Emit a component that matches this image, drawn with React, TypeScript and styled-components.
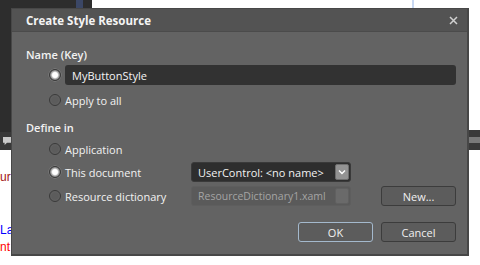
import React from "react";
import styled, { createGlobalStyle } from "styled-components";

const Global = createGlobalStyle`
  html, body { margin: 0; padding: 0; }
  body {
    width: 480px;
    height: 265px;
    overflow: hidden;
    font-family: "Open Sans", "Noto Sans", sans-serif;
  }
`;

const Screen = styled.div`
  position: relative;
  width: 480px;
  height: 265px;
  overflow: hidden;
  display: flex;
  flex-direction: column;
  background: #ffffff;
`;

const TopStrip = styled.div`
  display: flex;
  height: 8px;
  flex: none;
`;

const Seg = styled.div<{ $w?: number; $c: string }>`
  flex: ${(p) => (p.$w ? `0 0 ${p.$w}px` : "1 1 auto")};
  background: ${(p) => p.$c};
`;

const Lower = styled.div`
  flex: 1;
  display: flex;
`;

const LeftPane = styled.div`
  width: 11px;
  flex: none;
  display: flex;
  flex-direction: column;
`;

const DarkBlock = styled.div<{ $h: number; $c: string }>`
  height: ${(p) => p.$h}px;
  flex: none;
  background: ${(p) => p.$c};
`;

const ToolRow = styled.div`
  height: 18px;
  flex: none;
  background: #383838;
  display: flex;
  align-items: center;
  padding-left: 3px;
`;

const CodeArea = styled.div`
  flex: 1;
  background: #ffffff;
  padding-top: 19px;
  font-family: "Liberation Sans", sans-serif;
  font-size: 12px;
  line-height: 17.5px;
  white-space: nowrap;
`;

const CodeLine = styled.div<{ $c: string }>`
  height: 17.5px;
  color: ${(p) => p.$c};
`;

const Middle = styled.div`
  flex: 1;
  background: #ffffff;
`;

const RightPane = styled.div`
  width: 12px;
  flex: none;
  display: flex;
  flex-direction: column;
`;

const Dialog = styled.div`
  position: absolute;
  left: 11px;
  top: 8px;
  width: 458px;
  height: 248px;
  box-sizing: border-box;
  border: 1px solid #474747;
  border-right-width: 2px;
  border-bottom-width: 2px;
  background: #636363;
  display: flex;
  flex-direction: column;
  color: #f2f2f2;
  font-size: 11px;
`;

const TitleBar = styled.div`
  height: 23px;
  flex: none;
  box-sizing: border-box;
  background: #535353;
  border-bottom: 1px solid #4b4b4b;
  display: flex;
  align-items: center;
  justify-content: space-between;
  padding: 0 9px 0 14px;
`;

const Title = styled.div`
  font-weight: 700;
  font-size: 11.5px;
  color: #f4f4f4;
`;

const CloseBtn = styled.div`
  width: 10px;
  height: 10px;
  display: flex;
  align-items: center;
  justify-content: center;
`;

const Body = styled.div`
  flex: 1;
  display: flex;
  flex-direction: column;
  padding: 15px 11px 0 14px;
`;

const SectionLabel = styled.div<{ $mt?: number }>`
  height: 16px;
  line-height: 16px;
  font-weight: 600;
  margin-top: ${(p) => p.$mt ?? 0}px;
`;

const Row = styled.div<{ $mt: number }>`
  height: 20px;
  margin-top: ${(p) => p.$mt}px;
  padding-left: 23px;
  display: flex;
  align-items: center;
`;

const Option = styled.label<{ $w?: number }>`
  display: flex;
  align-items: center;
  gap: 4px;
  height: 20px;
  white-space: nowrap;
  ${(p) => (p.$w ? `width: ${p.$w}px; flex: none;` : "")}
`;

const Radio = styled.span<{ $checked?: boolean }>`
  width: 12px;
  height: 12px;
  flex: none;
  box-sizing: border-box;
  border-radius: 50%;
  border: 1px solid #3a3a3a;
  background: ${(p) =>
    p.$checked
      ? "radial-gradient(circle, #ffffff 0 2.4px, #e6e6e6 3px, #adadad 3.8px, #7c7c7c 5px)"
      : "radial-gradient(circle, #5c5c5c 0 3px, #626262 5px)"};
  box-shadow: ${(p) => (p.$checked ? "0 0 0 0.5px #8a8a8a" : "none")};
`;

const NameInput = styled.div`
  flex: 1;
  height: 20px;
  box-sizing: border-box;
  margin-left: 4px;
  background: #323232;
  border-radius: 3px;
  display: flex;
  align-items: center;
  padding-left: 7px;
  color: #f4f4f4;
`;

const Field = styled.div<{ $disabled?: boolean }>`
  width: 160px;
  height: 20px;
  flex: none;
  box-sizing: border-box;
  border-radius: 3px;
  border: 1px solid ${(p) => (p.$disabled ? "#5e5e5e" : "#3a3a3a")};
  background: ${(p) => (p.$disabled ? "#5a5a5a" : "#2e2e2e")};
  color: ${(p) => (p.$disabled ? "#a4a4a4" : "#f2f2f2")};
  display: flex;
  align-items: center;
  justify-content: space-between;
  padding: 0 1px 0 6px;
  white-space: nowrap;
  font-size: ${(p) => (p.$disabled ? "10.5px" : "11px")};
`;

const DropBtn = styled.span<{ $disabled?: boolean }>`
  width: 14px;
  height: 16px;
  flex: none;
  box-sizing: border-box;
  border-radius: 2px;
  border: 1px solid ${(p) => (p.$disabled ? "#606060" : "#6e6e6e")};
  background: ${(p) => (p.$disabled ? "#6a6a6a" : "#939393")};
  display: flex;
  align-items: center;
  justify-content: center;
`;

const Button = styled.div<{ $focused?: boolean }>`
  width: 75px;
  height: 20px;
  box-sizing: border-box;
  flex: none;
  border-radius: 3px;
  border: ${(p) => (p.$focused ? "1.5px solid #a4b9cd" : "1px solid #3c3c3c")};
  background: #5c5c5c;
  display: flex;
  align-items: center;
  justify-content: center;
  color: #f0f0f0;
`;

const Spacer = styled.div`
  flex: 1;
`;

const ButtonRow = styled.div`
  margin-top: 16px;
  display: flex;
  justify-content: flex-end;
  gap: 8px;
`;

export default function App() {
  return (
    <>
      <Global />
      <Screen>
        <TopStrip>
          <Seg $w={76} $c="#2d2d2d" />
          <Seg $w={7} $c="#3b4766" />
          <Seg $w={9} $c="#2d2d2d" />
          <Seg $w={320} $c="#ffffff" />
          <Seg $w={2} $c="#c8d8f2" />
          <Seg $c="#ffffff" />
        </TopStrip>
        <Lower>
          <LeftPane>
            <DarkBlock $h={124} $c="#2d2d2d" />
            <ToolRow>
              <svg width="10" height="11" viewBox="0 0 10 11">
                <path d="M0 0H10V7H5L2 10V7H0Z" fill="#c9c9c9" />
              </svg>
            </ToolRow>
            <CodeArea>
              <CodeLine $c="#a31515">ur</CodeLine>
              <CodeLine $c="#000">&nbsp;</CodeLine>
              <CodeLine $c="#000">&nbsp;</CodeLine>
              <CodeLine $c="#0000ff">La</CodeLine>
              <CodeLine $c="#ff0000">nt</CodeLine>
            </CodeArea>
          </LeftPane>
          <Middle />
          <RightPane>
            <DarkBlock $h={122} $c="#ffffff" />
            <DarkBlock $h={7} $c="#3a3a3a" />
            <DarkBlock $h={6} $c="#7a7a7a" />
            <DarkBlock $h={7} $c="#3a3a3a" />
          </RightPane>
        </Lower>

        <Dialog>
          <TitleBar>
            <Title>Create Style Resource</Title>
            <CloseBtn>
              <svg width="9" height="9" viewBox="0 0 9 9">
                <path d="M1 1L8 8M8 1L1 8" stroke="#d0d0d0" strokeWidth="1.5" />
              </svg>
            </CloseBtn>
          </TitleBar>
          <Body>
            <SectionLabel>Name (Key)</SectionLabel>
            <Row $mt={2}>
              <Radio $checked />
              <NameInput>MyButtonStyle</NameInput>
            </Row>
            <Row $mt={5}>
              <Option>
                <Radio />
                Apply to all
              </Option>
            </Row>
            <SectionLabel $mt={10}>Define in</SectionLabel>
            <Row $mt={3}>
              <Option>
                <Radio />
                Application
              </Option>
            </Row>
            <Row $mt={3}>
              <Option $w={142}>
                <Radio $checked />
                This document
              </Option>
              <Field>
                UserControl: &lt;no name&gt;
                <DropBtn>
                  <svg width="8" height="6" viewBox="0 0 8 6">
                    <path d="M1 1.5L4 4.5L7 1.5" fill="none" stroke="#ffffff" strokeWidth="1.4" />
                  </svg>
                </DropBtn>
              </Field>
            </Row>
            <Row $mt={4}>
              <Option $w={142}>
                <Radio />
                Resource dictionary
              </Option>
              <Field $disabled>
                ResourceDictionary1.xaml
                <DropBtn $disabled />
              </Field>
              <Spacer />
              <Button>New...</Button>
            </Row>
            <ButtonRow>
              <Button $focused>OK</Button>
              <Button>Cancel</Button>
            </ButtonRow>
          </Body>
        </Dialog>
      </Screen>
    </>
  );
}
